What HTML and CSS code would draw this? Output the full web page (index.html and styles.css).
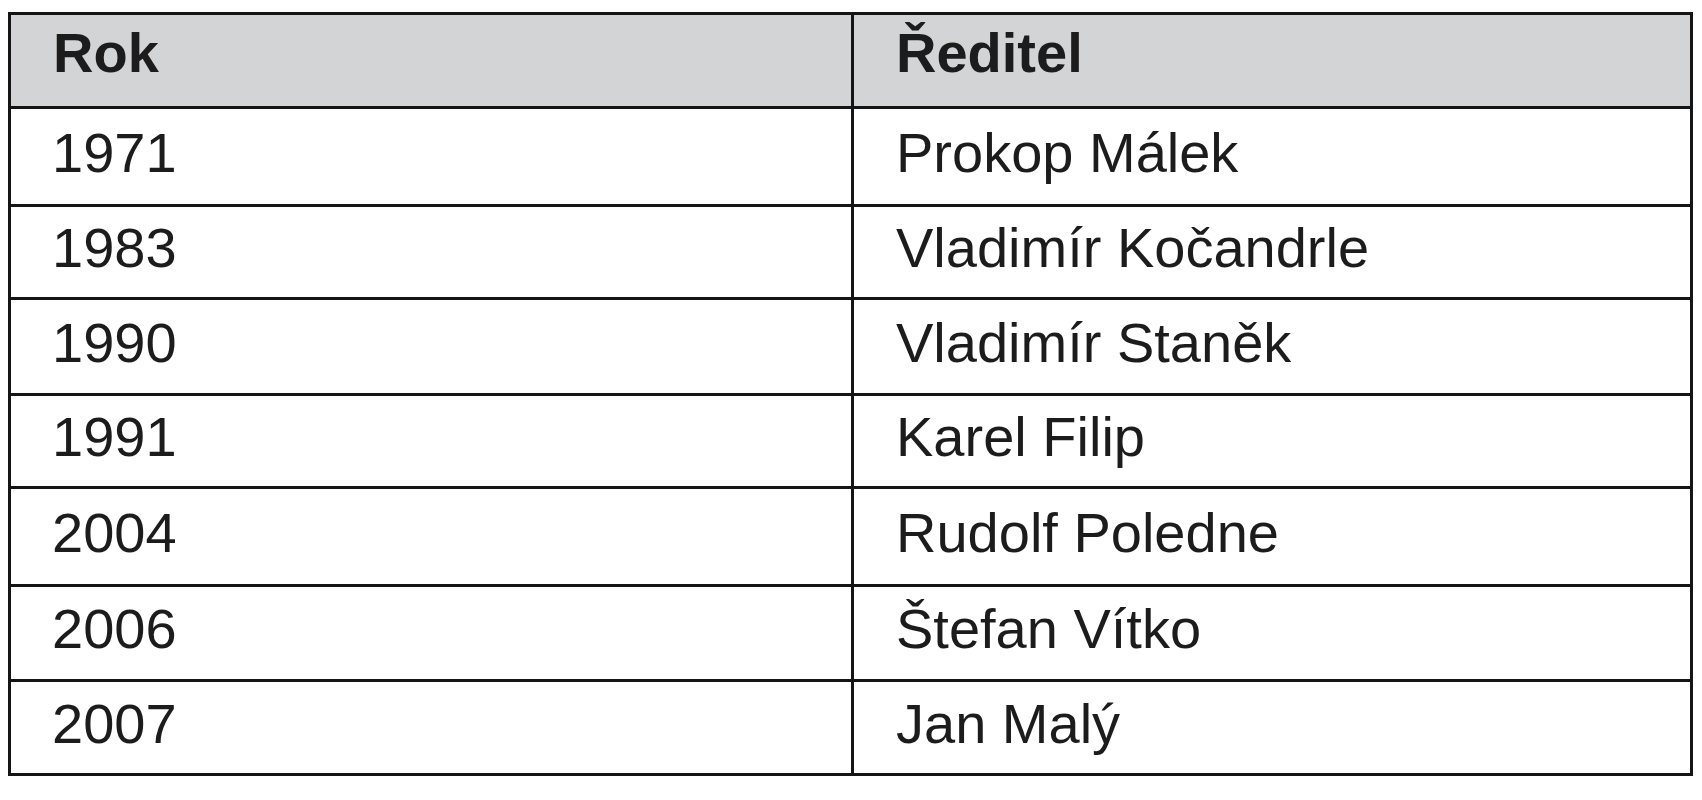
FILE: index.html
```html
<!DOCTYPE html>
<html lang="cs">
<head>
<meta charset="utf-8">
<title>Ředitelé</title>
<link rel="stylesheet" href="styles.css">
</head>
<body>
<div class="table" role="table">
  <div class="cell head" role="columnheader">Rok</div>
  <div class="cell head" role="columnheader">Ředitel</div>
  <div class="cell">1971</div>
  <div class="cell">Prokop Málek</div>
  <div class="cell">1983</div>
  <div class="cell">Vladimír Kočandrle</div>
  <div class="cell">1990</div>
  <div class="cell">Vladimír Staněk</div>
  <div class="cell">1991</div>
  <div class="cell">Karel Filip</div>
  <div class="cell">2004</div>
  <div class="cell">Rudolf Poledne</div>
  <div class="cell">2006</div>
  <div class="cell">Štefan Vítko</div>
  <div class="cell">2007</div>
  <div class="cell">Jan Malý</div>
</div>
</body>
</html>
```

FILE: styles.css
```css
html, body {
  background: #ffffff;
}
body {
  margin: 12px 0 0 8px;
  font-family: "Liberation Sans", Arial, sans-serif;
  color: #1c1c1c;
}
.table {
  display: grid;
  width: 1685px;
  box-sizing: border-box;
  grid-template-columns: 843px 839px;
  grid-template-rows: 94px 98px 93px 96px 93px 98px 95px 94px;
  border-top: 3px solid #151515;
  border-left: 3px solid #151515;
}
.cell {
  box-sizing: border-box;
  display: flex;
  align-items: center;
  border-right: 3px solid #151515;
  border-bottom: 3px solid #151515;
  padding: 0 0 7px 41px;
  font-size: 56px;
  line-height: 1.15;
  white-space: nowrap;
}
.cell:nth-child(2n) {
  padding-left: 42px;
}
.head {
  background: #d3d4d6;
  font-weight: bold;
  padding-bottom: 15px;
}
.head:first-child {
  padding-left: 42px;
}
```
